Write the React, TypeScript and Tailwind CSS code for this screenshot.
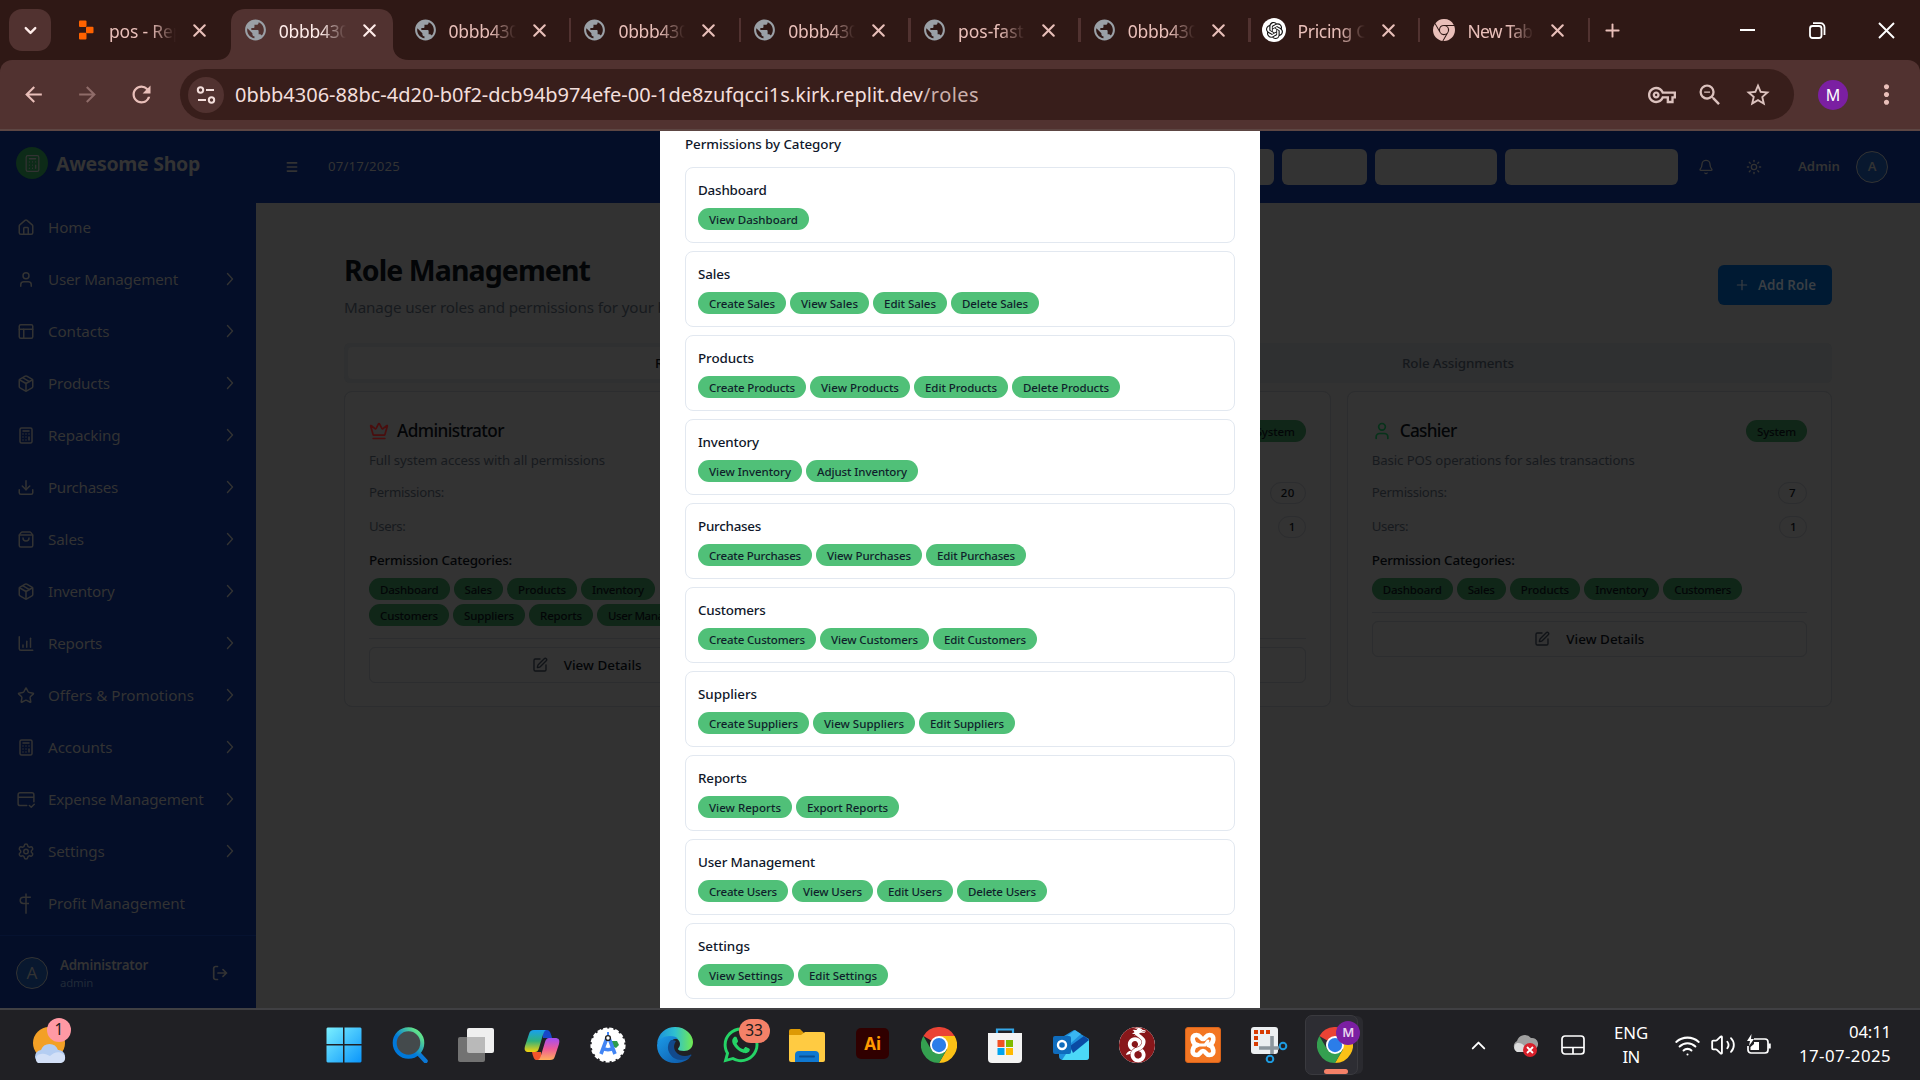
import React, { useLayoutEffect, useRef } from "react";
import {
  House, User, PanelsTopLeft, Package, Calculator, Download, ShoppingBag,
  ChartColumnIncreasing, Star, Settings, ChevronRight, Menu, Bell, Sun, Crown, Plus, X,
  ChevronDown, ChevronUp, SquarePen, Wifi, Volume2,
} from "lucide-react";
import { MdPublic, MdOutlineVpnKey, MdZoomOut, MdStarBorder, MdMoreVert, MdRefresh, MdArrowBack, MdArrowForward } from "react-icons/md";
import { SiOpenai, SiWireguard, SiGooglechrome } from "react-icons/si";
import { FaWhatsapp } from "react-icons/fa";

/** Text run whose letter spacing is tuned so that it takes exactly `w` pixels. */
function Fit({ w, children, className = "" }: { w: number; children: string; className?: string }) {
  const ref = useRef<HTMLSpanElement>(null);
  useLayoutEffect(() => {
    const el = ref.current;
    if (!el) return;
    el.style.letterSpacing = "0px";
    const natural = el.getBoundingClientRect().width;
    el.style.letterSpacing = `${(w - natural) / children.length}px`;
  }, [w, children]);
  return <span ref={ref} className={`inline-block whitespace-nowrap ${className}`}>{children}</span>;
}

/* ---------- Browser chrome ---------- */

function ReplitIcon() {
  return (
    <svg width="22" height="22" viewBox="0 0 22 22" fill="#ff6200">
      <rect x="4" y="1.5" width="7.5" height="6.6" rx="1" />
      <rect x="11" y="7.8" width="7.5" height="6.4" rx="1" />
      <rect x="4" y="13.8" width="7.5" height="6.6" rx="1" />
    </svg>
  );
}

type TabInfo = { icon: "replit" | "globe" | "openai" | "chrome"; title: string; w: number; active?: boolean; sep?: boolean };
const tabs: TabInfo[] = [
  { icon: "replit", title: "pos - Replit", w: 89 },
  { icon: "globe", title: "0bbb4306-88", w: 105, active: true },
  { icon: "globe", title: "0bbb4306-88", w: 105, sep: true },
  { icon: "globe", title: "0bbb4306-88", w: 105, sep: true },
  { icon: "globe", title: "0bbb4306-88", w: 105, sep: true },
  { icon: "globe", title: "pos-fastapi", w: 91, sep: true },
  { icon: "globe", title: "0bbb4306-88", w: 105, sep: true },
  { icon: "openai", title: "Pricing Calc", w: 91, sep: true },
  { icon: "chrome", title: "New Tab", w: 65, sep: true },
];

function TabItem({ t }: { t: TabInfo }) {
  return (
    <div className="relative w-[169.8px] h-full flex items-center shrink-0">
      {t.active && (
        <svg className="absolute left-[-14px] top-[9px]" width="192" height="51" viewBox="0 0 192 51" fill="#513230">
          <path d="M0 51C9 51 14 45 14 37V14C14 5 20 0 28 0H162C170 0 176 5 176 14V37C176 45 182 51 192 51Z" />
        </svg>
      )}
      <div className="relative flex items-center w-full pl-[12px] h-[60px]">
        <span className="w-[25px] flex justify-center">
          {t.icon === "replit" && <ReplitIcon />}
          {t.icon === "globe" && <MdPublic size={26} color="#9aa0a6" />}
          {t.icon === "openai" && (
            <span className="w-[24px] h-[24px] rounded-full bg-white flex items-center justify-center">
              <SiOpenai size={17} color="#111" />
            </span>
          )}
          {t.icon === "chrome" && <SiGooglechrome size={22} color="#e9bfb9" />}
        </span>
        <span className={`ml-[11px] mt-[2px] w-[67px] overflow-hidden text-[17.5px] [mask-image:linear-gradient(to_right,black_62%,transparent_100%)] ${t.active ? "text-[#ffedea]" : "text-[#e9bfb9]"}`}>
          <Fit w={t.w}>{t.title}</Fit>
        </span>
        <X className="ml-[13px]" size={21} strokeWidth={2.4} color={t.active ? "#ffedea" : "#e9bfb9"} />
      </div>
      {t.sep && <span className="absolute right-[-1px] top-[18px] w-[2.5px] h-[24px] bg-[#513230]" />}
    </div>
  );
}

function TabStrip() {
  return (
    <div className="h-[60px] bg-[#2f1815] flex items-center pl-[9px] text-[#e9bfb9]">
      <div className="w-[42px] h-[42px] rounded-[13px] bg-[#513230] flex items-center justify-center">
        <ChevronDown size={19} strokeWidth={3} color="#ffedea" />
      </div>
      <div className="ml-[10px] flex h-full w-[1528px]">
        {tabs.map((t, i) => (
          <TabItem key={i} t={t} />
        ))}
      </div>
      <Plus size={21} strokeWidth={2.2} className="ml-[13px]" />
      <div className="flex-1" />
      <div className="flex items-center text-white w-[160px]">
        <span className="w-[15px] h-[2px] bg-white" />
        <svg className="ml-[54px]" width="17" height="17" viewBox="0 0 17 17" fill="none" stroke="white" strokeWidth="1.8">
          <rect x="1" y="4" width="11.5" height="12" rx="2.5" />
          <path d="M4 1.2h7.5a4 4 0 0 1 4 4V13" />
        </svg>
        <svg className="ml-[52px]" width="17" height="17" viewBox="0 0 17 17" stroke="white" strokeWidth="1.9"><path d="M1 1 16 16M16 1 1 16" /></svg>
      </div>
      <div className="w-[20px]" />
    </div>
  );
}

function Toolbar() {
  return (
    <div className="bg-[#2f1815]">
      <div className="h-[71px] bg-[#513230] rounded-t-[12px] border-b-2 border-[#5d4643] flex items-center pl-[21px]">
        <MdArrowBack size={25} color="#e9bfb9" />
        <MdArrowForward size={25} color="#8f6c69" className="ml-[29px]" />
        <MdRefresh size={27} color="#e9bfb9" className="ml-[28px]" />
        <div className="ml-[25px] w-[1614px] h-[51px] rounded-full bg-[#381e1b] flex items-center pl-[8px]">
          <span className="w-[36px] h-[36px] rounded-full bg-[#513230] flex items-center justify-center">
            <svg width="20" height="20" viewBox="0 0 20 20" fill="none" stroke="#f3dedb" strokeWidth="2">
              <circle cx="4.5" cy="5" r="2.7" /><path d="M10 5h8M2 15h8" /><circle cx="15.5" cy="15" r="2.7" />
            </svg>
          </span>
          <span className="ml-[11px] text-[20px] text-[#f3dedb] flex">
            <Fit w={688}>0bbb4306-88bc-4d20-b0f2-dcb94b974efe-00-1de8zufqcci1s.kirk.replit.dev</Fit>
            <Fit w={56} className="text-[#cbb0ac]">/roles</Fit>
          </span>
          <div className="flex-1" />
          <MdOutlineVpnKey size={28} color="#dcc2be" />
          <MdZoomOut size={28} color="#dcc2be" className="ml-[20px]" />
          <MdStarBorder size={28} color="#dcc2be" className="ml-[20px] mr-[22px]" />
        </div>
        <span className="ml-[24px] w-[30px] h-[30px] rounded-full bg-[#7b1fa2] text-white text-[16px] flex items-center justify-center">M</span>
        <MdMoreVert size={31} color="#e9bfb9" className="ml-[23px]" />
      </div>
    </div>
  );
}

/* ---------- Sidebar ---------- */

function ExpenseIcon({ size = 18 }: { size?: number }) {
  return (
    <svg width={size} height={size} viewBox="0 0 24 24" fill="none" stroke="currentColor" strokeWidth="2" strokeLinecap="round" strokeLinejoin="round">
      <path d="M13 20H4a2.5 2.5 0 0 1-2.5-2.5v-12A2.5 2.5 0 0 1 4 3h16a2.5 2.5 0 0 1 2.5 2.5V15M1.5 9h21M16.5 20l2.5 2.3 4-4" />
    </svg>
  );
}
function ProfitIcon({ size = 18 }: { size?: number }) {
  return (
    <svg width={size} height={size + 2} viewBox="0 0 24 27" fill="none" stroke="currentColor" strokeWidth="2">
      <path d="M12 0v27M18.500 5H8.500a4 4 0 0 0 0 8.500H16" />
    </svg>
  );
}
function LogoutIcon() {
  return (
    <svg width="16" height="16" viewBox="0 0 16 16" fill="none" stroke="#333" strokeWidth="1.7" strokeLinecap="round" strokeLinejoin="round">
      <path d="M5.500 1.500H3.500A1.800 1.800 0 0 0 1.700 3.300v9.400a1.800 1.800 0 0 0 1.800 1.800h2M6 8h8.500M11 4.700 14.500 8 11 11.300" />
    </svg>
  );
}

type IconType = React.ComponentType<{ size?: number | string }>;
const nav: [IconType, string, number, boolean][] = [
  [House, "Home", 43, false],
  [User, "User Management", 130, true],
  [PanelsTopLeft, "Contacts", 61.5, true],
  [Package, "Products", 62, true],
  [Calculator, "Repacking", 72.5, true],
  [Download, "Purchases", 70, true],
  [ShoppingBag, "Sales", 36, true],
  [Package, "Inventory", 66.5, true],
  [ChartColumnIncreasing, "Reports", 54, true],
  [Star, "Offers & Promotions", 146, true],
  [Calculator, "Accounts", 64.5, true],
  [ExpenseIcon as IconType, "Expense Management", 155.5, true],
  [Settings, "Settings", 56.5, true],
  [ProfitIcon as IconType, "Profit Management", 137, false],
];

function Avatar({ size = "text-[17px]" }: { size?: string }) {
  return (
    <span className={`w-[32px] h-[32px] rounded-full border-[1.5px] border-[#333] bg-[#08182f] flex items-center justify-center text-[#333] ${size}`}>A</span>
  );
}

function Sidebar() {
  return (
    <aside className="w-[256px] h-full bg-[#040e28] text-[#333] flex flex-col shrink-0">
      <div className="h-[64px] flex items-center pl-[16px]">
        <span className="w-[32px] h-[32px] rounded-full bg-[#0d2b18] flex items-center justify-center">
          <Calculator size={19} strokeWidth={1.6} />
        </span>
        <Fit w={144} className="ml-[8px] mt-[2px] text-[19.5px] font-bold">Awesome Shop</Fit>
      </div>
      <nav className="flex flex-col pt-[6px]">
        {nav.map(([Icon, label, w, arrow]) => (
          <div key={label} className="h-[52px] flex items-center pl-[17px] pr-[16px]">
            <span className="w-[18px] flex justify-center"><Icon size={19} /></span>
            <Fit w={w} className="ml-[13px] text-[15.2px]">{label}</Fit>
            <span className="flex-1" />
            {arrow && <ChevronRight size={20} strokeWidth={1.7} className="scale-y-110" />}
          </div>
        ))}
      </nav>
      <div className="mt-auto h-[73px] border-t border-[#061230] flex items-center px-[16px] pt-[2px]">
        <Avatar />
        <div className="ml-[12px] flex flex-col items-start">
          <Fit w={88} className="text-[13.4px] leading-[20px] font-semibold">Administrator</Fit>
          <Fit w={33} className="text-[11.4px] leading-[16px] text-[#212b39]">admin</Fit>
        </div>
        <span className="flex-1" />
        <span className="mr-[12px]"><LogoutIcon /></span>
      </div>
    </aside>
  );
}

/* ---------- Page ---------- */

function HeaderBar() {
  return (
    <header className="h-[72px] bg-[#040e28] text-[#333] flex items-center pl-[29px] pr-[32px]">
      <Menu size={14} strokeWidth={2.8} />
      <Fit w={72} className="ml-[29px] text-[13.2px]">07/17/2025</Fit>
      <span className="flex-1" />
      <div className="flex gap-[8px]">
        <span className="w-[100px] h-[36px] rounded-md bg-[#333]" />
        <span className="w-[85px] h-[36px] rounded-md bg-[#333]" />
        <span className="w-[122px] h-[36px] rounded-md bg-[#333]" />
        <span className="w-[173px] h-[36px] rounded-md bg-[#333]" />
      </div>
      <Bell size={16} className="ml-[20px]" />
      <Sun size={16} className="ml-[32px]" />
      <Fit w={42} className="ml-[36px] mr-[16px] text-[13.2px] font-semibold">Admin</Fit>
      <Avatar size="text-[13px] font-semibold" />
    </header>
  );
}

function DimPill({ w, children }: { w: number; children: string }) {
  return (
    <span className="h-[22px] shrink-0 rounded-full bg-[#102618] px-[11px] pt-[1px] text-[11.5px] font-medium text-[#030507] flex items-center">
      <Fit w={w - 22}>{children}</Fit>
    </span>
  );
}

function Count({ children, w }: { children: string; w: number }) {
  return (
    <span className="h-[22px] rounded-full border border-[#2c2d2f] px-[10px] text-[11.5px] font-medium text-[#030507] flex items-center">
      <Fit w={w}>{children}</Fit>
    </span>
  );
}

type Role = {
  icon?: "crown" | "user"; name?: string; nameW: number; desc?: string; descW: number;
  perms: string; permsW: number; rows: [string, number][][]; bodyHeight: string;
};
const roles: Role[] = [
  {
    icon: "crown", name: "Administrator", nameW: 107, desc: "Full system access with all permissions", descW: 236, perms: "", permsW: 14, bodyHeight: "h-[48px]",
    rows: [
      [["Dashboard", 80.5], ["Sales", 49.5], ["Products", 70], ["Inventory", 74]],
      [["Customers", 80], ["Suppliers", 72], ["Reports", 64], ["User Management", 118]],
    ],
  },
  { nameW: 0, descW: 0, perms: "20", permsW: 14, rows: [], bodyHeight: "h-[48px]" },
  {
    icon: "user", name: "Cashier", nameW: 57, desc: "Basic POS operations for sales transactions", descW: 263, perms: "7", permsW: 7, bodyHeight: "h-[22px]",
    rows: [[["Dashboard", 81], ["Sales", 49], ["Products", 70.5], ["Inventory", 75], ["Customers", 79]]],
  },
];

function RoleCard({ r }: { r: Role }) {
  return (
    <div className="rounded-lg border border-[#2c2d2f] bg-[#333] px-[24px] h-[316px] pt-[25px] text-[#030507]">
      <div className="h-[28px] flex items-center justify-between">
        <div className="flex items-center">
          {r.icon === "crown" && <Crown size={20} color="#4a0e0e" />}
          {r.icon === "user" && <User size={20} color="#07321a" />}
          {r.name && <Fit w={r.nameW} className="ml-[8px] text-[17.2px] font-medium">{r.name}</Fit>}
        </div>
        {r.name !== "Administrator" && <div className="ml-auto"><DimPill w={61}>System</DimPill></div>}
      </div>
      <div className="mt-[5px] h-[20px] text-[13.2px] leading-[20px] text-[#171a1e]">
        {r.desc && <Fit w={r.descW}>{r.desc}</Fit>}
      </div>
      <div className="mt-[12px] flex h-[22px] items-center justify-between">
        {r.name ? <Fit w={75} className="text-[13.2px] text-[#171a1e]">Permissions:</Fit> : <span />}
        {r.perms && <Count w={r.permsW}>{r.perms}</Count>}
      </div>
      <div className="mt-[12px] flex h-[22px] items-center justify-between">
        {r.name ? <Fit w={36.5} className="text-[13.2px] text-[#171a1e]">Users:</Fit> : <span />}
        {r.perms && <Count w={6}>1</Count>}
      </div>
      <div className="mt-[12px] h-[20px] leading-[20px] text-[13.4px] font-medium">
        {r.name && <Fit w={143}>Permission Categories:</Fit>}
      </div>
      <div className={`mt-[8px] flex flex-col gap-[4px] ${r.bodyHeight}`}>
        {r.rows.map((row, i) => (
          <div key={i} className="flex gap-[4px]">
            {row.map(([t, w]) => <DimPill key={t} w={w}>{t}</DimPill>)}
          </div>
        ))}
      </div>
      <div className="mt-[12px] border-t border-[#2c2d2f] pt-[8px]">
        <div className="h-[36px] rounded-md border border-[#2c2d2f] flex items-center justify-center gap-[16px]">
          {r.name && <SquarePen size={16} color="#101317" />}
          {r.name && <Fit w={78} className="text-[13.4px] font-medium">View Details</Fit>}
        </div>
      </div>
    </div>
  );
}

function Main() {
  return (
    <main className="flex-1 bg-[#323232] pl-[88px] pr-[88px] pt-[48px]">
      <div className="flex justify-between h-[70px]">
        <div className="flex flex-col items-start">
          <Fit w={246} className="mt-[1px] text-[28.5px] leading-[36px] font-bold text-[#030507]">Role Management</Fit>
          <Fit w={375} className="mt-[7px] text-[15.2px] leading-[24px] text-[#171a1e]">Manage user roles and permissions for your business</Fit>
        </div>
        <div className="mt-[14px] w-[114px] h-[40px] rounded-md bg-[#001a33] flex items-center text-[#3a3f44]">
          <Plus size={16} strokeWidth={1.8} className="ml-[16px]" />
          <Fit w={58} className="ml-[8px] mt-px text-[13.4px] font-semibold">Add Role</Fit>
        </div>
      </div>
      <div className="mt-[22px] h-[40px] rounded-md bg-[#2f3031] p-[4px] flex text-[13.4px] font-medium">
        <div className="flex-1 rounded bg-[#333] flex items-center justify-center pt-px text-[#030507]">
          <Fit w={126}>Roles &amp; Permissions</Fit>
        </div>
        <div className="flex-1 flex items-center justify-center pt-px text-[#15181c]">
          <Fit w={112}>Role Assignments</Fit>
        </div>
      </div>
      <div className="mt-[8px] grid grid-cols-3 gap-4">
        {roles.map((r, i) => <RoleCard key={i} r={r} />)}
      </div>
    </main>
  );
}

/* ---------- Permissions dialog ---------- */

const categories: [string, number, [string, number][]][] = [
  ["Dashboard", 68.5, [["View Dashboard", 111]]],
  ["Sales", 32, [["Create Sales", 88], ["View Sales", 79], ["Edit Sales", 74], ["Delete Sales", 88]]],
  ["Products", 56, [["Create Products", 108], ["View Products", 100], ["Edit Products", 94], ["Delete Products", 108]]],
  ["Inventory", 61, [["View Inventory", 104], ["Adjust Inventory", 112]]],
  ["Purchases", 63, [["Create Purchases", 114], ["View Purchases", 106], ["Edit Purchases", 100]]],
  ["Customers", 67.5, [["Create Customers", 118], ["View Customers", 109], ["Edit Customers", 104]]],
  ["Suppliers", 59, [["Create Suppliers", 111], ["View Suppliers", 102], ["Edit Suppliers", 96]]],
  ["Reports", 49, [["View Reports", 94], ["Export Reports", 103]]],
  ["User Management", 117, [["Create Users", 90], ["View Users", 81], ["Edit Users", 76], ["Delete Users", 90]]],
  ["Settings", 52, [["View Settings", 96], ["Edit Settings", 90]]],
];

function Dialog() {
  return (
    <div className="absolute left-[660px] top-0 w-[600px] h-[877px] bg-white px-[25px] text-[#0f172a] overflow-hidden">
      <div className="mt-[3px] h-[20px] leading-[20px] text-[13.4px] font-medium text-[#0f172a]"><Fit w={156}>Permissions by Category</Fit></div>
      <div className="mt-[13px] flex flex-col gap-[8px]">
        {categories.map(([name, w, perms]) => (
          <div key={name} className="h-[76px] rounded-lg border border-[#e2e8f0] px-[12px] pt-[12px]">
            <div className="h-[20px] leading-[20px] text-[13.4px] font-medium text-[#0f172a]"><Fit w={w}>{name}</Fit></div>
            <div className="mt-[8px] flex gap-[4px]">
              {perms.map(([t, pw]) => (
                <span key={t} className="h-[22px] rounded-full bg-[#50c078] px-[11px] pt-[1px] text-[11.5px] font-medium flex items-center text-[#0f1f2b]">
                  <Fit w={pw - 22}>{t}</Fit>
                </span>
              ))}
            </div>
          </div>
        ))}
      </div>
    </div>
  );
}

/* ---------- Taskbar ---------- */

function ChromeLogo() {
  return (
    <svg width="36" height="36" viewBox="0 0 48 48">
      <path d="M24 24 3.200 12A24 24 0 0 1 44.800 12L24 12Z" fill="#ea4335" />
      <path d="M24 12H44.800A24 24 0 0 1 24 48L34.400 30Z" fill="#fbc116" />
      <path d="M34.400 30 24 48A24 24 0 0 1 3.200 12L13.600 30Z" fill="#34a050" />
      <circle cx="24" cy="24" r="12" fill="#fff" /><circle cx="24" cy="24" r="9.500" fill="#2b7de9" />
    </svg>
  );
}

const apps: React.ReactNode[] = [
  <svg width="36" height="36" viewBox="0 0 36 36">
    <defs><linearGradient id="win" x1="0" y1="0" x2="1" y2="1" gradientUnits="objectBoundingBox"><stop offset="0" stopColor="#7bf0ff" /><stop offset="1" stopColor="#0a95fb" /></linearGradient></defs>
    <path fill="url(#win)" d="M1.500 .5H17V17H.5V1.500ZM18.500 .5H34.500L35.500 1.500V17H18.500ZM.5 18.500H17V35.500H1.500L.5 34.500ZM18.500 18.500H35.500V34.500L34.500 35.500H18.500Z" />
  </svg>,
  <svg width="36" height="36" viewBox="0 0 36 36">
    <defs><linearGradient id="sr" x1="0" y1="1" x2="1" y2="0"><stop offset=".4" stopColor="#0078d9" /><stop offset=".85" stopColor="#5fe08c" /></linearGradient></defs>
    <path d="M27 27 33.500 34" stroke="#0b78d6" strokeWidth="4.500" strokeLinecap="round" />
    <circle cx="16.500" cy="16" r="13.800" fill="#444a4c" stroke="url(#sr)" strokeWidth="4" />
  </svg>,
  <svg width="38" height="36" viewBox="0 0 38 36">
    <rect x="10" y="1" width="27" height="25" rx="2" fill="#efefef" />
    <rect x="1" y="10" width="27" height="25" rx="2" fill="#727272" />
    <path d="M10 10H28V26H12a2 2 0 0 1-2-2Z" fill="#b9b9b9" />
  </svg>,
  <svg width="36" height="36" viewBox="0 0 36 36">
    <defs>
      <linearGradient id="c1" x1="0" y1="0" x2="0" y2="1"><stop offset="0" stopColor="#18a0f0" /><stop offset=".5" stopColor="#2fb17c" /><stop offset="1" stopColor="#f7d30c" /></linearGradient>
      <linearGradient id="c2" x1="0" y1="0" x2="0" y2="1"><stop offset="0" stopColor="#a24df5" /><stop offset=".5" stopColor="#ee5b97" /><stop offset="1" stopColor="#ffae5c" /></linearGradient>
    </defs>
    <path d="M18 3h5c3 0 4 4 5 8h-9Z" fill="#1747c8" /><path d="M18 33h-6c-2 0-3-4-4-8h9Z" fill="#f4552c" />
    <path d="M10 3h12c-2 1-3 4-4 8l-3 10c-1 3-2 4-4 4H5c-4 0-5-2-4-6l4-12c1-3 2-4 5-4Z" fill="url(#c1)" />
    <path d="M26 33H14c2-1 3-4 4-8l3-10c1-3 2-4 4-4h6c4 0 5 2 4 6l-4 12c-1 3-2 4-5 4Z" fill="url(#c2)" />
  </svg>,
  <svg width="36" height="36" viewBox="0 0 36 36">
    <circle cx="18" cy="18" r="16.400" fill="#fff" stroke="#fff" strokeWidth="2.400" strokeDasharray="4 2" />
    <path d="M22 14h5l2 4-3 3-4-2Z" fill="#2e9c4c" />
    <path d="m17 11-6 16M19 11l6 16M12.500 20.500c3 3 8 3 11 0" fill="none" stroke="#4285f4" strokeWidth="3.600" />
    <path d="M18 5v5" stroke="#4285f4" strokeWidth="2" /><circle cx="18" cy="11" r="2.400" fill="#fff" stroke="#222" strokeWidth="1.400" />
  </svg>,
  <svg width="36" height="36" viewBox="0 0 36 36">
    <defs>
      <linearGradient id="e1" x1="0" y1="0" x2="1" y2="0"><stop offset="0" stopColor="#1b8fdc" /><stop offset=".5" stopColor="#2fc0d0" /><stop offset="1" stopColor="#72ea50" /></linearGradient>
      <linearGradient id="e2" x1="0" y1="0" x2="1" y2="1"><stop offset="0" stopColor="#1b9be8" /><stop offset="1" stopColor="#0d55a5" /></linearGradient>
    </defs>
    <path d="M0 17C1 6 9 0 18 0c11 0 18 8 18 15 0 6-4 9-9 9-4 0-6-1-6-2 0-1 2-2 2-5 0-4-4-7-10-7C7 10 2 13 0 17Z" fill="url(#e1)" />
    <path d="M0 18c1-6 7-9 13-9 4 0 7 1 8 3-6-1-9 4-9 9 0 7 6 11 12 11 4 0 7-1 9-2-3 4-9 6-15 6C8 36 0 29 0 18Z" fill="url(#e2)" />
    <path d="M14 13c-3 3-4 8-2 12 2 5 7 8 12 8 4 0 7-1 10-4 1-1 0-2-1-1-5 2-11 1-14-3-3-4-2-8 0-11-2-1-4-1-5-1Z" fill="#124a8c" />
  </svg>,
  <div className="relative w-[36px] h-[36px] flex items-center justify-center">
    <FaWhatsapp size={40} color="#25d366" className="shrink-0" />
    <span className="absolute left-[16px] top-[-8px] w-[31px] h-[24px] rounded-full bg-[#f48168] text-[#1b1b1b] text-[15.500px] flex items-center justify-center">33</span>
  </div>,
  <svg width="36" height="36" viewBox="0 0 36 36">
    <path d="M0 4a2 2 0 0 1 2-2h9l4 4v6H0Z" fill="#dd9a05" /><path d="M0 8h12l4-3h18a2 2 0 0 1 2 2v26a2 2 0 0 1-2 2H2a2 2 0 0 1-2-2Z" fill="#ffcb42" />
    <path d="M6 35V28a4 4 0 0 1 4-4H26a4 4 0 0 1 4 4v7Z" fill="#0f78d1" /><path d="M11 29.500h14" stroke="#0a4f92" strokeWidth="2" strokeLinecap="round" />
  </svg>,
  <div className="w-[33px] h-[31px] mb-[3px] rounded-[5px] bg-[#300000] text-[#ff9a00] font-bold text-[17px] flex items-center justify-center">Ai</div>,
  <ChromeLogo />,
  <svg width="36" height="36" viewBox="0 0 36 36">
    <path d="M10 8V2.500h16V8" fill="none" stroke="#35a7e8" strokeWidth="2.200" /><path d="M1 6h34v26a4 4 0 0 1-4 4H5a4 4 0 0 1-4-4Z" fill="#f3f3f3" />
    <path d="M10.500 13h7v7h-7Z" fill="#f25022" /><path d="M19 13h7v7h-7Z" fill="#7fba00" /><path d="M10.500 21h7v7h-7Z" fill="#00a4ef" /><path d="M19 21h7v7h-7Z" fill="#ffb900" />
  </svg>,
  <svg width="36" height="36" viewBox="0 0 36 36">
    <path d="M6 12 21 3l15 9v18a3 3 0 0 1-3 3H10a4 4 0 0 1-4-4Z" fill="#1e8fdc" />
    <path d="M13 10 22 3l6 4-10 9Z" fill="#39b6f2" /><path d="M36 13v17a3 3 0 0 1-3 3H9l4-6 18-12Z" fill="#4bd8f7" /><path d="M17 19 31 9l5 4-16 13Z" fill="#0a4ba4" />
    <rect x="0" y="9" width="18" height="18" rx="2" fill="#0f6cbd" /><circle cx="9" cy="18" r="4" fill="none" stroke="#fff" strokeWidth="2.400" />
  </svg>,
  <div className="w-[36px] h-[36px] rounded-full bg-white flex items-center justify-center overflow-hidden"><SiWireguard size={36} color="#88171a" /></div>,
  <div className="w-[36px] h-[36px] rounded-[3px] bg-[#f37623] border border-[#d9631a] flex items-center justify-center">
    <svg width="28" height="26" viewBox="0 0 28 26" fill="none" stroke="#fff" strokeWidth="4.600" strokeLinecap="round" strokeLinejoin="round">
      <path d="M8.500 13C3 12 1.500 3 7.500 3c4 0 3.500 4 6.500 4s2.500-4 6.500-4c6 0 4.500 9-1 10 5.500 1 7 10 1 10-4 0-3.500-4-6.500-4s-2.500 4-6.500 4c-6 0-4.500-9 1-10Z" />
      <path d="M9 13h7l3-4" strokeWidth="3" />
    </svg>
  </div>,
  <svg width="37" height="36" viewBox="0 0 37 36">
    <rect x="0" y="0" width="27" height="27" rx="3" fill="#eceff1" />
    <path d="M3 5h4M9 5h4M15 5h4M3 11h4M3 17h4" stroke="#d83b01" strokeWidth="4" />
    <path d="M21 9v18M8 21h20" stroke="#8c969d" strokeWidth="3.600" /><circle cx="32" cy="19" r="3.300" fill="none" stroke="#1d9be0" strokeWidth="2" /><circle cx="19" cy="32" r="3.300" fill="none" stroke="#1d9be0" strokeWidth="2" />
  </svg>,
];

function Taskbar() {
  return (
    <footer className="h-[72px] bg-[#202024] border-t-2 border-[#404043] flex items-center text-white relative">
      <div className="w-[311px] pl-[32px]">
        <div className="relative w-[36px] h-[40px]">
          <svg width="36" height="40" viewBox="0 0 36 40">
            <circle cx="17" cy="18" r="16" fill="#f3a026" />
            <path d="M10 38a6.500 6.500 0 0 1-1-13 9 9 0 0 1 17 0 6.500 6.500 0 0 1 1 13Z" fill="#b4cdf2" />
            <path d="M6 38a5 5 0 0 1 3-9c4-1 6 1 9 2 4-4 9-5 13-2a5 5 0 0 1-2 9Z" fill="#d3e0f7" />
          </svg>
          <span className="absolute left-[15px] top-[-7px] w-[24px] h-[24px] rounded-full bg-[#ff99a4] text-[#1b1b1b] text-[15.500px] flex items-center justify-center">1</span>
        </div>
      </div>
      {apps.map((a, i) => (
        <div key={i} className="w-[66.1px] flex justify-center shrink-0">{a}</div>
      ))}
      <div className="relative ml-[3px] w-[53px] h-[60px] rounded-[7px] bg-[#2d2d33] border border-[#3a3a3f] flex items-center justify-center shadow-[6px_0_0_-1px_#2a2a2f]">
        <div className="mr-[-7px]"><ChromeLogo /></div>
        <span className="absolute left-[30px] top-[5px] w-[24px] h-[24px] rounded-full bg-[#7b1fa2] text-[13px] font-semibold text-[#e8d5ee] flex items-center justify-center">M</span>
        <span className="absolute left-[18px] bottom-0 w-[24px] h-[5px] rounded-full bg-[#f48168]" />
      </div>
      <div className="flex-1" />
      <div className="flex items-center w-[428px] shrink-0 text-[16.800px] leading-[24px]">
        <ChevronUp size={23} strokeWidth={2} className="-ml-[4px]" />
        <svg className="ml-[22px]" width="26" height="26" viewBox="0 0 26 26">
          <path d="M6 20a6 6 0 0 1-1-11 8 8 0 0 1 14-3 6 6 0 0 1 2 12Z" fill="#a0a0a0" /><path d="M5 20a5 5 0 0 1 0-9 8 8 0 0 1 8 4v5Z" fill="#dcdcdc" />
          <circle cx="18" cy="18" r="7" fill="#d8202b" /><path d="m15 15 6 6m0-6-6 6" stroke="#fff" strokeWidth="1.800" />
        </svg>
        <svg className="ml-[23px]" width="24" height="20" viewBox="0 0 24 20" fill="none" stroke="#fff" strokeWidth="1.700"><rect x="1" y="1" width="22" height="18" rx="3" /><path d="M1 12.500h22M12 12.500V19" /></svg>
        <div className="ml-[28px] w-[36px] flex flex-col items-center"><Fit w={34}>ENG</Fit><Fit w={17}>IN</Fit></div>
        <Wifi size={27} strokeWidth={1.800} className="ml-[25px]" />
        <Volume2 size={26} strokeWidth={1.700} className="ml-[9px]" />
        <svg className="ml-[10px]" width="26" height="22" viewBox="0 0 26 22" fill="none" stroke="#fff" strokeWidth="1.700">
          <path d="M8 5h11a3 3 0 0 1 3 3v8a3 3 0 0 1-3 3H5a3 3 0 0 1-3-3v-4" /><path d="M23.500 9.500v5" strokeWidth="2.500" />
          <path d="M8 8h5v8H4.500v-3L8 10Z" fill="#fff" stroke="none" /><path d="M5.500 0 1 7h3l-1 5 5-7H5Z" fill="#fff" stroke="none" />
        </svg>
        <div className="flex-1 flex flex-col items-end pr-[8px] -mt-[2px]"><Fit w={42}>04:11</Fit><Fit w={92}>17-07-2025</Fit></div>
      </div>
      <div className="w-[21px] shrink-0" />
    </footer>
  );
}

export default function App() {
  return (
    <div className="w-[1920px] h-[1080px] overflow-hidden flex flex-col font-['Noto_Sans','Open_Sans',sans-serif] bg-[#202024]">
      <TabStrip />
      <Toolbar />
      <div className="relative h-[877px] flex overflow-hidden">
        <Sidebar />
        <div className="flex-1 flex flex-col min-w-0">
          <HeaderBar />
          <Main />
        </div>
        <Dialog />
      </div>
      <Taskbar />
    </div>
  );
}
